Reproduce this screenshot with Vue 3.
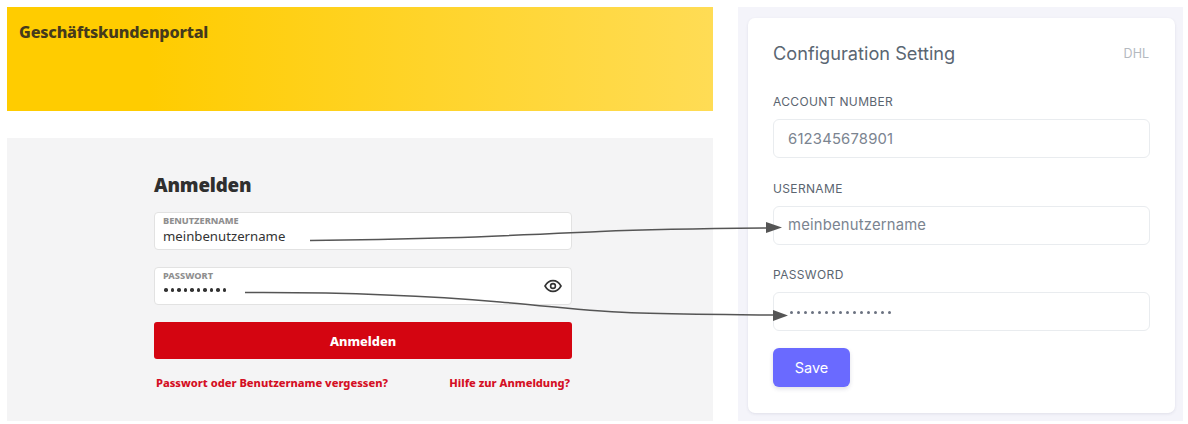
<template>
  <div class="page">
    <div class="left">
      <div class="banner">Geschäftskundenportal</div>
      <div class="login">
        <div class="login-form">
          <h2 class="login-title">Anmelden</h2>
          <div class="login-field">
            <span class="login-label">BENUTZERNAME</span>
            <span class="login-value">meinbenutzername</span>
          </div>
          <div class="login-field pass">
            <span class="login-label">PASSWORT</span>
            <span class="login-dots">
              <i v-for="n in 10" :key="n"></i>
            </span>
            <svg class="eye" width="18" height="14" viewBox="0 0 18 14" fill="none" stroke="#333" stroke-width="1.6">
              <path d="M1 7c2-3.600 4.800-5.400 8-5.400s6 1.800 8 5.400c-2 3.600-4.800 5.400-8 5.400S3 10.600 1 7z" />
              <circle cx="9" cy="7" r="2.400" />
            </svg>
          </div>
          <button class="login-btn">Anmelden</button>
          <div class="login-links">
            <a>Passwort oder Benutzername vergessen?</a>
            <a>Hilfe zur Anmeldung?</a>
          </div>
        </div>
      </div>
    </div>

    <div class="right">
      <div class="card">
        <div class="card-head">
          <h3 class="card-title">Configuration Setting</h3>
          <span class="card-tag">DHL</span>
        </div>
        <div v-for="f in fields" :key="f.label" class="field">
          <label class="field-label">{{ f.label }}</label>
          <div class="field-input">
            <template v-if="f.value">{{ f.value }}</template>
            <span v-else class="field-dots"><i v-for="n in 15" :key="n"></i></span>
          </div>
        </div>
        <button class="save-btn">Save</button>
      </div>
    </div>

    <svg class="arrows" width="1188" height="424" viewBox="0 0 1188 424" fill="none">
      <path d="M310 240.500C420 240 500 236 600 231.500C660 229 710 228.500 771 228" stroke="#555" stroke-width="1.500" />
      <path d="M782 227.500L766 222V233z" fill="#555" />
      <path d="M245 292.500C340 292 420 295 500 302C560 307 590 312 640 313C690 314.500 730 314.500 773 315" stroke="#555" stroke-width="1.500" />
      <path d="M788 315.500L773 310V321z" fill="#555" />
    </svg>
  </div>
</template>

<script setup>
const fields = [
  { label: 'ACCOUNT NUMBER', value: '612345678901' },
  { label: 'USERNAME', value: 'meinbenutzername' },
  { label: 'PASSWORD', value: '' }
]
</script>

<style>
html, body {
  margin: 0;
  background: #fff;
}
</style>

<style scoped>
.page {
  position: relative;
  width: 1188px;
  height: 424px;
  box-sizing: border-box;
  padding: 7px 5px 3px 7px;
  display: flex;
  gap: 25px;
  overflow: hidden;
}
.left {
  width: 706px;
  display: flex;
  flex-direction: column;
  gap: 27px;
}
.banner {
  height: 104px;
  box-sizing: border-box;
  padding: 14px 12px;
  background: linear-gradient(90deg, #ffcc00 20%, #ffdc55 100%);
  font-family: "Noto Sans", sans-serif;
  font-weight: 800;
  font-size: 16.200px;
  line-height: 22px;
  letter-spacing: -0.2px;
  color: #453a1c;
}
.login {
  flex: 1;
  background: #f4f4f5;
  padding: 34px 0 0 147px;
}
.login-form {
  width: 418px;
}
.login-title {
  margin: 0 0 13px;
  font-family: "Noto Sans", sans-serif;
  font-weight: 900;
  font-size: 18.800px;
  line-height: 27px;
  letter-spacing: -0.2px;
  color: #2f2f2f;
}
.login-field {
  position: relative;
  height: 38px;
  box-sizing: border-box;
  padding: 3px 8px 0;
  background: #fff;
  border: 1px solid #e2e2e2;
  border-radius: 4px;
  display: flex;
  flex-direction: column;
  margin-bottom: 17px;
}
.login-label {
  font-family: "Noto Sans", sans-serif;
  font-weight: 800;
  font-size: 9.200px;
  line-height: 10px;
  color: #8f8f8f;
}
.login-value {
  font-family: "Noto Sans", sans-serif;
  font-size: 13.200px;
  line-height: 20px;
  color: #333;
}
.login-dots {
  display: flex;
  gap: 3px;
  margin-top: 7px;
  padding-left: 1px;
}
.login-dots i {
  width: 3.500px;
  height: 3.500px;
  border-radius: 50%;
  background: #333;
}
.eye {
  position: absolute;
  right: 9px;
  top: 11px;
}
.login-btn {
  display: block;
  width: 100%;
  height: 37px;
  border: none;
  border-radius: 3px;
  background: #d40511;
  color: #fff;
  font-family: "Noto Sans", sans-serif;
  font-weight: 800;
  font-size: 12.800px;
  padding: 0;
}
.login-links {
  display: flex;
  justify-content: space-between;
  padding: 16px 2px 0;
  font-family: "Noto Sans", sans-serif;
  font-weight: 800;
  font-size: 11.100px;
  line-height: 16px;
  color: #d40f24;
}
.right {
  flex: 1;
  background: #f4f4fa;
  padding: 11px 8px 8px 10px;
  display: flex;
}
.card {
  flex: 1;
  box-sizing: border-box;
  background: #fff;
  border-radius: 7px;
  padding: 24px 25px 25px;
  box-shadow: 0 1px 3px rgba(50, 50, 93, 0.1);
  font-family: Inter, sans-serif;
}
.card-head {
  display: flex;
  justify-content: space-between;
  align-items: center;
  height: 22px;
  margin-bottom: 30px;
}
.card-title {
  margin: 0;
  font-weight: 400;
  font-size: 18.200px;
  color: #5a6672;
}
.card-tag {
  font-size: 12.500px;
  color: #b4b9bf;
  margin-right: 1px;
}
.field {
  margin-bottom: 22.500px;
}
.field-label {
  display: block;
  font-size: 12px;
  line-height: 16px;
  letter-spacing: 0.35px;
  color: #5b6570;
  margin-bottom: 9px;
}
.field-input {
  height: 39px;
  box-sizing: border-box;
  border: 1px solid #e9ecef;
  border-radius: 6px;
  padding: 0 14px;
  display: flex;
  align-items: center;
  font-size: 14.800px;
  letter-spacing: 0.2px;
  color: #7b8490;
}
.field-dots {
  display: flex;
  gap: 4px;
  margin: 1px 0 0 2px;
}
.field-dots i {
  width: 3px;
  height: 3px;
  border-radius: 50%;
  background: #6b7280;
}
.save-btn {
  display: block;
  width: 77px;
  height: 39px;
  margin-top: -5.500px;
  border: none;
  border-radius: 6px;
  background: #6a6aff;
  color: #fff;
  font-family: Inter, sans-serif;
  font-size: 14.500px;
  padding: 0;
  box-shadow: 0 2px 4px rgba(50, 50, 93, 0.15);
}
.arrows {
  position: absolute;
  top: 0;
  left: 0;
  pointer-events: none;
}
</style>
